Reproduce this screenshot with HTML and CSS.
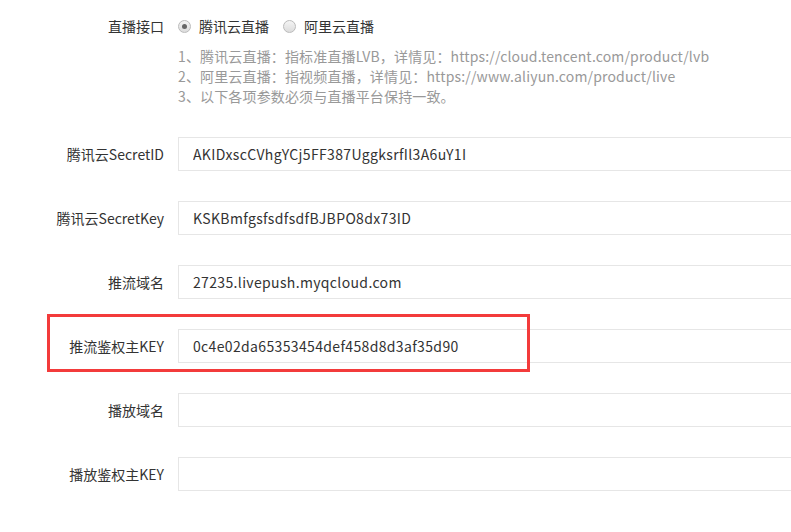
FILE: index.html
```html
<!DOCTYPE html>
<html lang="zh-CN">
<head>
    <meta charset="UTF-8">
    <title>直播设置</title>
    <link rel="stylesheet" href="styles.css">
</head>
<body>
<div id="form">
    <div class="row radio-row">
        <label class="label">直播接口</label>
        <div class="field">
            <label class="radio"><span class="dot checked"></span>腾讯云直播</label>
            <label class="radio"><span class="dot"></span>阿里云直播</label>
        </div>
    </div>
    <div class="help">
        <p>1、腾讯云直播：指标准直播LVB，详情见：https://cloud.tencent.com/product/lvb</p>
        <p>2、阿里云直播：指视频直播，详情见：https://www.aliyun.com/product/live</p>
        <p>3、以下各项参数必须与直播平台保持一致。</p>
    </div>
    <div class="row">
        <label class="label">腾讯云SecretID</label>
        <input class="input" type="text" value="AKIDxscCVhgYCj5FF387UggksrfIl3A6uY1I">
    </div>
    <div class="row">
        <label class="label">腾讯云SecretKey</label>
        <input class="input" type="text" value="KSKBmfgsfsdfsdfBJBPO8dx73ID">
    </div>
    <div class="row">
        <label class="label">推流域名</label>
        <input class="input" type="text" value="27235.livepush.myqcloud.com">
    </div>
    <div class="row marked">
        <label class="label">推流鉴权主KEY</label>
        <input class="input" type="text" value="0c4e02da65353454def458d8d3af35d90">
        <div class="mark"></div>
    </div>
    <div class="row">
        <label class="label">播放域名</label>
        <input class="input" type="text" value="">
    </div>
    <div class="row">
        <label class="label">播放鉴权主KEY</label>
        <input class="input" type="text" value="">
    </div>
</div>
</body>
</html>
```

FILE: styles.css
```css
html,body{
    margin: 0px;
    padding: 0px;
    background: #FFF;
    overflow: hidden;
}
body{
    font-family: "Microsoft YaHei", "Noto Sans CJK SC", sans-serif;
    font-size: 14px;
    color: #333;
}
p{
    margin: 0px;
}

#form{
    padding-top: 16px;
    width: 900px;
}
.row{
    display: flex;
    align-items: center;
    height: 34px;
    margin-bottom: 30px;
    position: relative;
}
.label{
    width: 164px;
    margin-right: 14px;
    text-align: right;
    flex: none;
}
.input{
    width: 640px;
    height: 34px;
    box-sizing: border-box;
    border: 1px solid #e6e6e6;
    padding: 0 14px;
    font-family: inherit;
    font-size: 14px;
    letter-spacing: 0.35px;
    color: #333;
    outline: none;
    flex: none;
}

.radio-row{
    height: 20px;
    margin-bottom: 0px;
}
.field{
    display: flex;
    align-items: center;
}
.radio{
    display: flex;
    align-items: center;
    margin-right: 14px;
    color: #333;
}
.dot{
    width: 11px;
    height: 11px;
    border: 1px solid #bbb;
    border-radius: 50%;
    background: linear-gradient(#f4f4f4, #dcdcdc);
    margin-right: 8px;
    position: relative;
}
.dot.checked:after{
    content: "";
    position: absolute;
    left: 3px;
    top: 3px;
    width: 5px;
    height: 5px;
    border-radius: 50%;
    background: #666;
}

.help{
    margin: 10px 0 31px 178px;
    color: #999;
    line-height: 20px;
    letter-spacing: 0.15px;
}

.mark{
    position: absolute;
    left: 47px;
    top: -15px;
    width: 477px;
    height: 52px;
    border: 3px solid #f33b3b;
}
```
